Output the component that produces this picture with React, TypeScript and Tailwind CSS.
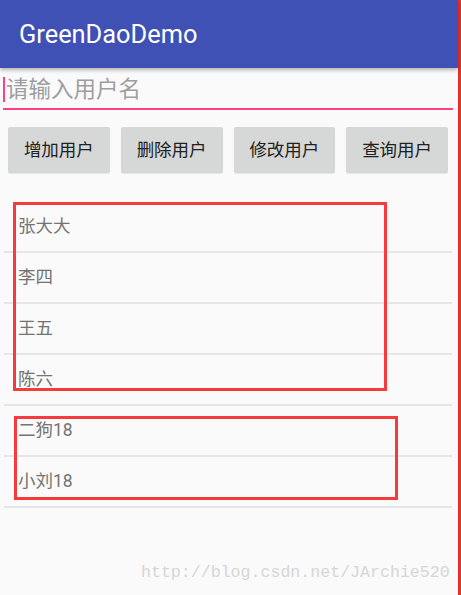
import React from "react";

const users = ["张大大", "李四", "王五", "陈六", "二狗18", "小刘18"];
const actions = ["增加用户", "删除用户", "修改用户", "查询用户"];

const font = { fontFamily: "Roboto, 'Noto Sans CJK SC', sans-serif" };

export default function App() {
  return (
    <div
      className="relative flex w-[461px] h-[595px] overflow-hidden bg-[#fafafa]"
      style={font}
    >
      <div className="w-[458px] flex flex-col">
        {/* toolbar */}
        <div className="h-[68px] bg-[#3f51b5] flex items-center pl-[19px] shadow-[0_2px_4px_rgba(0,0,0,0.3)] z-10">
          <span className="text-white text-[25.4px] leading-none mt-[1px]">GreenDaoDemo</span>
        </div>

        {/* input */}
        <div className="ml-[3px] mr-[5px] h-[42px] flex items-center border-b-2 border-[#ff4081]">
          <span className="w-[2px] h-[25px] bg-[#ff4081] mt-[2px]" />
          <span className="ml-[1px] text-[22.5px] leading-none text-[#9e9e9e] mt-[3px]">请输入用户名</span>
        </div>

        {/* buttons */}
        <div className="ml-[8px] w-[440px] mt-[17px] grid grid-cols-4 gap-[11px]">
          {actions.map((a) => (
            <button
              key={a}
              className="h-[46px] rounded-[2px] bg-[#d6d7d7] text-[17.5px] text-[#212121] shadow-[0_1px_1px_rgba(0,0,0,0.08)]"
            >
              {a}
            </button>
          ))}
        </div>

        {/* list */}
        <ul className="mt-[29px] ml-[4px] w-[448px]">
          {users.map((u) => (
            <li
              key={u}
              className="h-[51px] border-b-2 border-[#e6e6e6] flex items-center pl-[14px] text-[17.5px] text-[#737373]"
            >
              {u}
            </li>
          ))}
        </ul>
      </div>
      <div className="w-[3px] bg-[#e0322f]" />

      {/* annotation boxes */}
      <div className="absolute left-[13px] top-[202px] w-[374px] h-[189px] border-[3px] border-[#f53b3b]" />
      <div className="absolute left-[14px] top-[416px] w-[384px] h-[84px] border-[3px] border-[#f53b3b]" />

      {/* watermark */}
      <span
        className="absolute left-[141px] top-[562px] text-[16.6px] leading-[22px] text-[#d6d6d6]"
        style={{ fontFamily: "'Liberation Mono', monospace" }}
      >
        http://blog.csdn.net/JArchie520
      </span>
    </div>
  );
}
